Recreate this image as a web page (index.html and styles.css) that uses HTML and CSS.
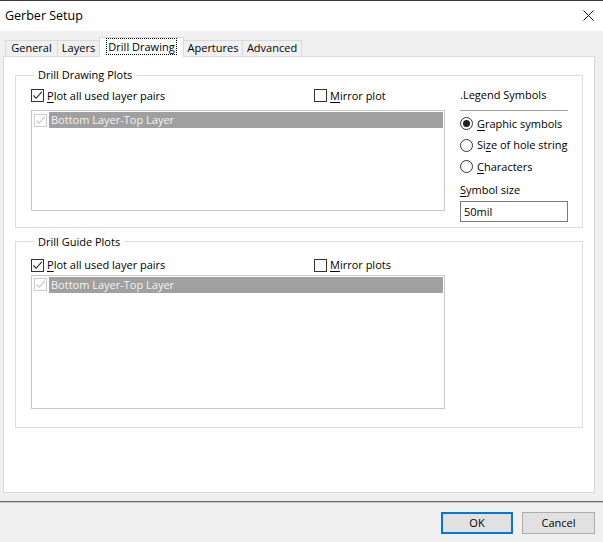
FILE: index.html
```html
<!DOCTYPE html>
<html>
<head>
<meta charset="utf-8">
<title>Gerber Setup</title>
<link rel="stylesheet" href="styles.css">
</head>
<body>
<div class="window">
  <div class="titlebar">
    <span class="title">Gerber Setup</span>
    <svg class="close" width="11" height="11" viewBox="0 0 11 11"><path d="M0.5 0.5L10.5 10.5M10.5 0.5L0.5 10.5" stroke="#1a1a1a" stroke-width="1" fill="none"/></svg>
  </div>
  <div class="client">
    <div class="tabs">
      <div class="tab t-general">General</div>
      <div class="tab t-layers">Layers</div>
      <div class="tab t-drill selected"><span class="focus">Drill Drawing</span></div>
      <div class="tab t-apertures">Apertures</div>
      <div class="tab t-advanced">Advanced</div>
    </div>
    <div class="panel">
      <fieldset class="group g1">
        <legend>Drill Drawing Plots</legend>
        <div class="g1-grid">
          <div class="col-left">
            <div class="checkrow r1">
              <label class="check"><span class="box"><svg width="11" height="11" viewBox="0 0 11 11"><path d="M1.5 5.5L4.2 8.3L9.8 1.8" stroke="#222" stroke-width="1.1" fill="none"/></svg></span><span><u>P</u>lot all used layer pairs</span></label>
              <label class="check"><span class="box"></span><span><u>M</u>irror plot</span></label>
            </div>
            <div class="listbox lb1">
              <div class="item"><span class="box disabled"><svg width="11" height="11" viewBox="0 0 11 11"><path d="M1.5 5.5L4.2 8.3L9.8 1.8" stroke="#c4c4c4" stroke-width="1.1" fill="none"/></svg></span><span class="item-text">Bottom Layer-Top Layer</span></div>
            </div>
          </div>
          <div class="col-right">
            <div class="legend-title">.Legend Symbols</div>
            <div class="radios">
              <label class="radio"><span class="circle on"><span class="dot"></span></span><span><u>G</u>raphic symbols</span></label>
              <label class="radio"><span class="circle"></span><span>Si<u>z</u>e of hole string</span></label>
              <label class="radio"><span class="circle"></span><span><u>C</u>haracters</span></label>
            </div>
            <div class="size-label"><u>S</u>ymbol size</div>
            <div class="textbox">50mil</div>
          </div>
        </div>
      </fieldset>
      <fieldset class="group g2">
        <legend>Drill Guide Plots</legend>
        <div class="col-left">
          <div class="checkrow r2">
            <label class="check"><span class="box"><svg width="11" height="11" viewBox="0 0 11 11"><path d="M1.5 5.5L4.2 8.3L9.8 1.8" stroke="#222" stroke-width="1.1" fill="none"/></svg></span><span><u>P</u>lot all used layer pairs</span></label>
            <label class="check"><span class="box"></span><span><u>M</u>irror plots</span></label>
          </div>
          <div class="listbox lb2">
            <div class="item"><span class="box disabled"><svg width="11" height="11" viewBox="0 0 11 11"><path d="M1.5 5.5L4.2 8.3L9.8 1.8" stroke="#c4c4c4" stroke-width="1.1" fill="none"/></svg></span><span class="item-text">Bottom Layer-Top Layer</span></div>
          </div>
        </div>
      </fieldset>
    </div>
    <div class="footer">
      <button class="btn ok">OK</button>
      <button class="btn cancel">Cancel</button>
    </div>
  </div>
</div>
</body>
</html>
```
FILE: styles.css
```css
* { box-sizing: border-box; }
html, body { margin: 0; padding: 0; }
body {
  width: 603px;
  height: 542px;
  overflow: hidden;
  background: #f0f0f0;
  font-family: "Open Sans", "Noto Sans", sans-serif;
  font-size: 11px;
  line-height: 16px;
  color: #000;
}
u { text-decoration: underline; text-underline-offset: 2px; }
.window { width: 603px; height: 542px; display: flex; flex-direction: column; }

.titlebar {
  height: 31px;
  background: #fff;
  border-top: 1px solid #3a3a3a;
  display: flex;
  align-items: center;
  justify-content: space-between;
  padding: 0 8px 0 5px;
}
.title { font-size: 12.5px; color: #000; }
.close { display: block; margin-top: -1px; margin-right: 1px; }

.client { flex: 1; display: flex; flex-direction: column; }

.tabs {
  height: 25px;
  display: flex;
  align-items: flex-end;
  padding-left: 5px;
  position: relative;
  z-index: 1;
}
.tab {
  height: 16px;
  border: 1px solid #d9d9d9;
  border-bottom: none;
  border-right: none;
  background: #f0f0f0;
  display: flex;
  align-items: center;
  justify-content: center;
  line-height: 14px;
  padding-bottom: 1px;
}
.t-general { width: 52px; }
.t-layers { width: 42px; }
.t-drill { width: 85px; }
.t-apertures { width: 58px; }
.t-advanced { width: 60px; border-right: 1px solid #d9d9d9; }
.tab.selected {
  height: 20px;
  margin-bottom: -1px;
  background: #fff;
  border: 1px solid #d9d9d9;
  border-bottom: none;
  padding-bottom: 3px;
}
.tab.selected + .tab { border-left: none; }
.focus { outline: 1px dotted #000; outline-offset: 0; padding: 0 1px; line-height: 15px; }

.panel {
  height: 437px;
  margin: 0 8px 0 3px;
  background: #fff;
  border: 1px solid #d9d9d9;
  padding: 0 11px;
}

.group {
  margin: 0;
  border: 1px solid #dcdcdc;
  padding: 0;
  min-width: 0;
}
.group legend {
  margin-left: 3px;
  padding: 0 4px;
  line-height: 16px;
}
.g1 { margin-top: 10px; padding: 4px 14px 5px 15px; }
.g2 { margin-top: 6px; padding: 7px 14px 18px 15px; }

.g1-grid { display: grid; grid-template-columns: 414px 1fr; column-gap: 15px; }

.checkrow {
  display: grid;
  grid-template-columns: 283px 1fr;
  height: 17px;
  align-items: center;
}
.r1 { margin-top: 0; }
.check { display: flex; align-items: center; }
.box {
  width: 13px;
  height: 13px;
  border: 1px solid #333;
  background: #fff;
  margin-right: 3px;
  display: flex;
  align-items: center;
  justify-content: center;
  flex: none;
}
.box svg { display: block; }
.box.disabled { border-color: #cccccc; }

.listbox {
  border: 1px solid #c8c8c8;
  background: #fff;
  padding: 1px 1px 0 1px;
}
.lb1 { margin-top: 6px; height: 101px; }
.lb2 { margin-top: 1px; height: 134px; }
.item { display: flex; align-items: center; height: 16px; }
.item .box { margin-left: 1px; margin-right: 2px; }
.item-text {
  flex: 1;
  height: 16px;
  background: #a0a0a0;
  color: #f4f4f4;
  padding-left: 2px;
  line-height: 16px;
}

.col-right { display: flex; flex-direction: column; }
.legend-title {
  margin-top: 0;
  padding-bottom: 7px;
  border-bottom: 1px solid #a0a0a0;
}
.radios { display: flex; flex-direction: column; margin-top: 2px; }
.radio { display: flex; align-items: center; height: 21.5px; }
.circle {
  width: 13px;
  height: 13px;
  border: 1px solid #333;
  border-radius: 50%;
  background: #fff;
  margin-right: 4px;
  display: flex;
  align-items: center;
  justify-content: center;
  flex: none;
}
.dot { width: 7px; height: 7px; border-radius: 50%; background: #222; }
.size-label { margin-top: 4px; }
.textbox {
  margin-top: 3px;
  height: 21px;
  border: 1px solid #7a7a7a;
  background: #fff;
  padding-left: 3px;
  line-height: 19px;
}

.g2 .col-left { width: 414px; }

.footer {
  flex: 1;
  margin-top: 8px;
  border-top: 1px solid #6a6a6a;
  box-shadow: inset 0 1px 0 #c8c8c8;
  display: flex;
  justify-content: flex-end;
  align-items: flex-start;
  padding: 10px 8px 0 0;
  gap: 9px;
}
.btn {
  font-family: "Open Sans", "Noto Sans", sans-serif;
  font-size: 11px;
  height: 22px;
  background: #e1e1e1;
  border: 1px solid #adadad;
  padding: 0;
  color: #000;
  line-height: 18px;
}
.ok { width: 72px; border: 2px solid #0078d7; }
.cancel { width: 73px; }
```
